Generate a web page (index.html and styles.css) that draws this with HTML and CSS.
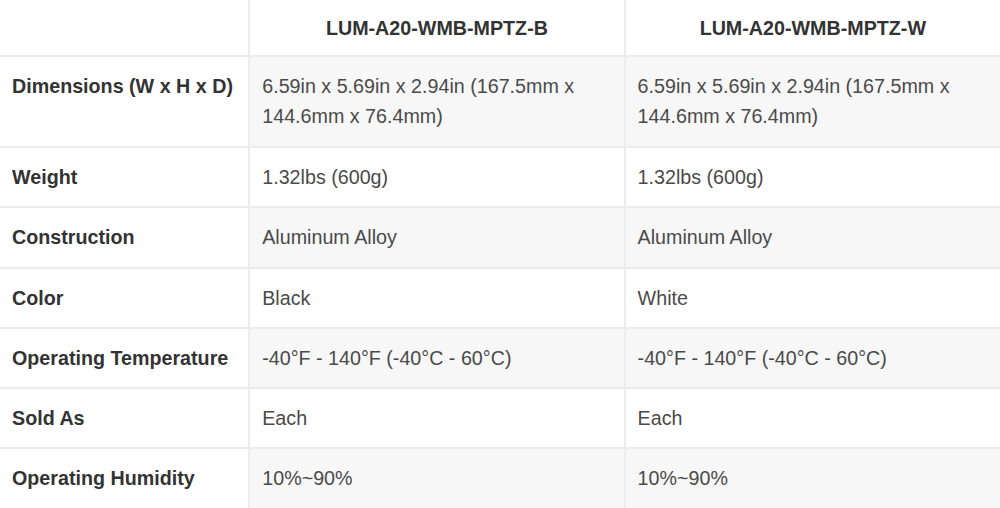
FILE: index.html
```html
<!DOCTYPE html>
<html>
<head>
<meta charset="utf-8">
<link rel="stylesheet" href="styles.css">
</head>
<body>
<table class="spec">
  <colgroup>
    <col class="c-label">
    <col class="c-val">
    <col class="c-val">
  </colgroup>
  <thead>
    <tr>
      <th class="corner"></th>
      <th>LUM-A20-WMB-MPTZ-B</th>
      <th>LUM-A20-WMB-MPTZ-W</th>
    </tr>
  </thead>
  <tbody>
    <tr class="shade first">
      <th class="label">Dimensions (W x H x D)</th>
      <td>6.59in x 5.69in x 2.94in (167.5mm x 144.6mm x 76.4mm)</td>
      <td>6.59in x 5.69in x 2.94in (167.5mm x 144.6mm x 76.4mm)</td>
    </tr>
    <tr>
      <th class="label">Weight</th>
      <td>1.32lbs (600g)</td>
      <td>1.32lbs (600g)</td>
    </tr>
    <tr class="shade">
      <th class="label">Construction</th>
      <td>Aluminum Alloy</td>
      <td>Aluminum Alloy</td>
    </tr>
    <tr>
      <th class="label">Color</th>
      <td>Black</td>
      <td>White</td>
    </tr>
    <tr class="shade">
      <th class="label">Operating Temperature</th>
      <td>-40°F - 140°F (-40°C - 60°C)</td>
      <td>-40°F - 140°F (-40°C - 60°C)</td>
    </tr>
    <tr>
      <th class="label">Sold As</th>
      <td>Each</td>
      <td>Each</td>
    </tr>
    <tr class="shade">
      <th class="label">Operating Humidity</th>
      <td>10%~90%</td>
      <td>10%~90%</td>
    </tr>
  </tbody>
</table>
</body>
</html>
```

FILE: styles.css
```css
html, body {
  margin: 0;
  padding: 0;
  background: #ffffff;
}

body {
  font-family: "Liberation Sans", Arial, sans-serif;
  font-size: 19.7px;
  color: #444444;
  overflow: hidden;
}

.spec {
  width: 1000px;
  border-collapse: collapse;
  table-layout: fixed;
}

.c-label { width: 249px; }
.c-val { width: 375px; }

.spec th,
.spec td {
  border-right: 2px solid #ececec;
  border-bottom: 2px solid #ececec;
  line-height: 30px;
  vertical-align: top;
}

.spec thead th {
  height: 56px;
  padding: 0 12px;
  box-sizing: border-box;
  text-align: center;
  vertical-align: middle;
  font-weight: bold;
  color: #333333;
}

.spec tbody th.label {
  text-align: left;
  font-weight: bold;
  color: #333333;
  padding: 14px 12px 14.3px 12px;
  background: #ffffff;
}

.spec tbody td {
  padding: 14px 12px 14.3px 12px;
  text-align: left;
  color: #4a4a4a;
}

.spec tr.first th.label,
.spec tr.first td {
  padding-bottom: 15px;
}

.spec tr.shade td {
  background: #f7f7f7;
}

.spec tr > :last-child {
  border-right: none;
}
```
